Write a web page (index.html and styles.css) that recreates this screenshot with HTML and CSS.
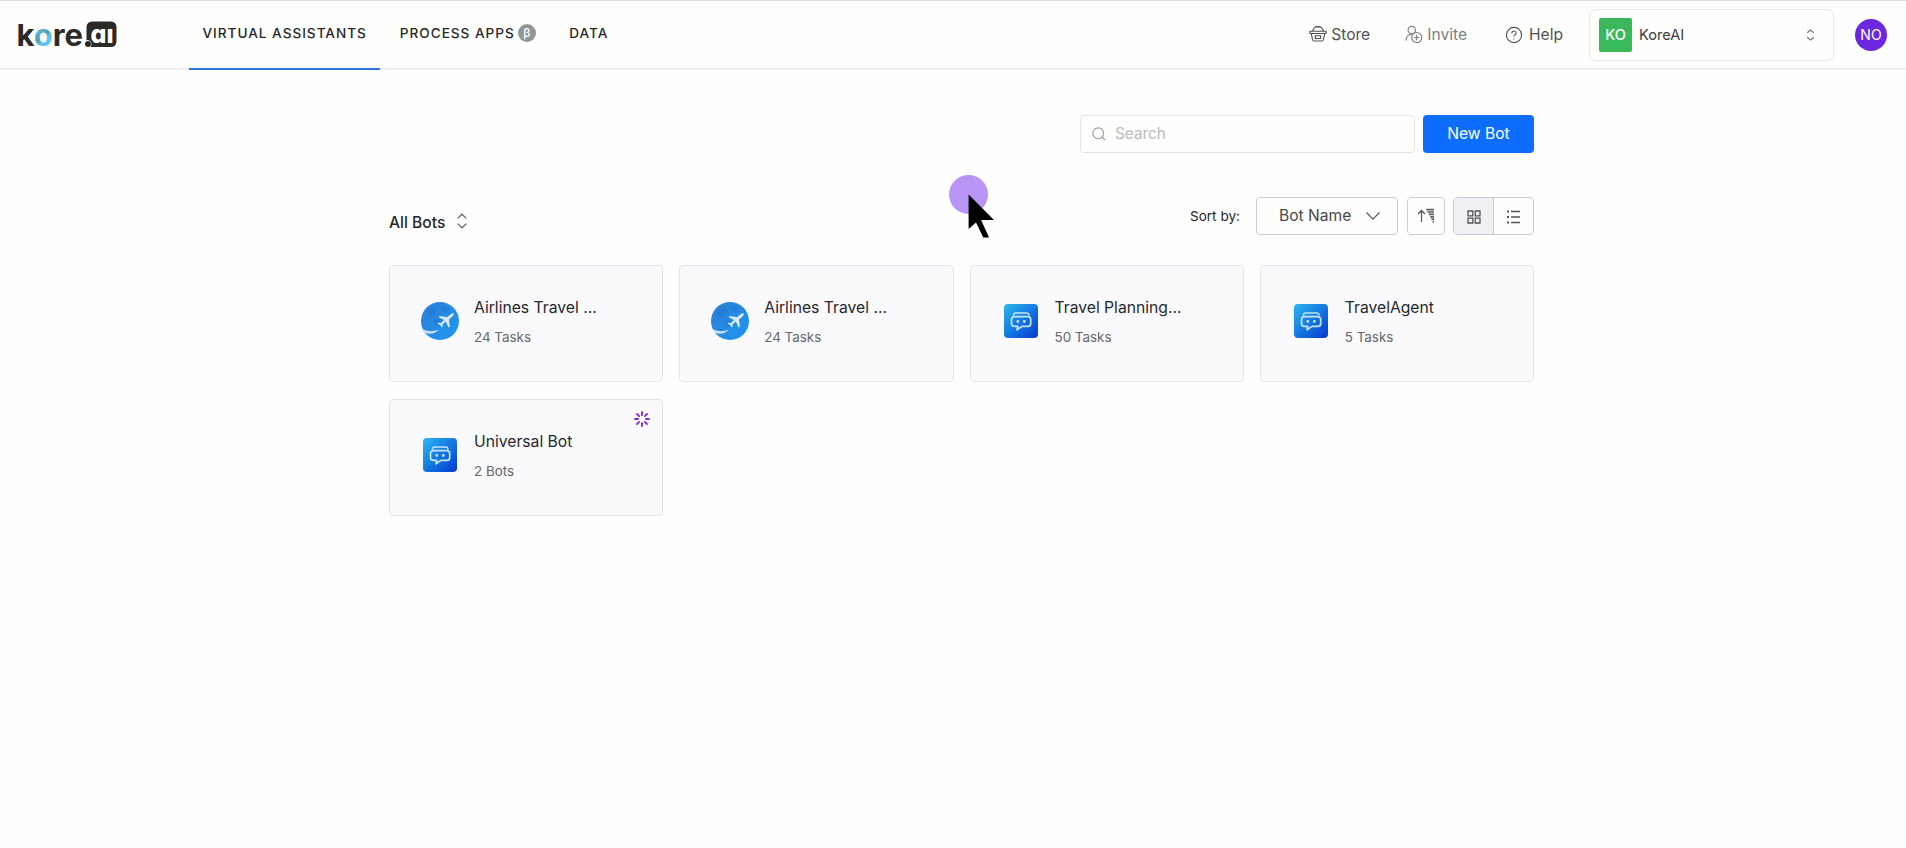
FILE: index.html
```
<!DOCTYPE html>
<html lang="en">
<head>
<meta charset="utf-8">
<title>Virtual Assistants</title>
<link rel="stylesheet" href="styles.css">
</head>
<body>
<svg class="defs" width="0" height="0" aria-hidden="true">
  <defs>
    <linearGradient id="bot-fill" x1="0" y1="0" x2="1" y2="1"><stop offset="0" stop-color="#2cb8ee"/><stop offset=".5" stop-color="#1478e2"/><stop offset="1" stop-color="#0538cf"/></linearGradient>
    <linearGradient id="sky" x1="0" y1="0" x2="1" y2="1"><stop offset="0" stop-color="#2b7fd6"/><stop offset="1" stop-color="#1f97f0"/></linearGradient>
    <linearGradient id="ring" gradientUnits="userSpaceOnUse" x1="20" y1="20" x2="35" y2="37"><stop offset="0" stop-color="#62c4f0"/><stop offset=".35" stop-color="#4f9fa8"/><stop offset=".6" stop-color="#62c4f0"/><stop offset="1" stop-color="#62c4f0"/></linearGradient>
    <symbol id="bot" viewBox="0 0 34 34">
      <rect width="34" height="34" rx="4" fill="url(#bot-fill)"/>
      <g fill="none" stroke="#c4e4fd" stroke-width="1.7" stroke-linecap="round" stroke-linejoin="round">
        <path d="M9.500 10.900q.2-1.900 2.200-1.900h11q2 0 2.200 1.900"/>
        <path d="M10.500 12.600h13.200q3 0 3 3v3.800q0 3-3 3h-5.700l-5 3.400.8-3.400h-3.300q-3 0-3-3v-3.800q0-3 3-3z"/>
      </g>
      <circle cx="13.800" cy="17.500" r="1.400" fill="#c4e4fd"/><circle cx="20.300" cy="17.500" r="1.400" fill="#c4e4fd"/>
    </symbol>
    <symbol id="plane" viewBox="0 0 38 38">
      <circle cx="19" cy="19" r="19" fill="url(#sky)"/>
      <path d="M5 9l5-4 7 3-3 6-6 2zM21 3l8 3-3 5-6-2zM12 18l6-2 3 5-5 4z" fill="#1d6fca" opacity=".35"/>
      <path d="M1 27Q9 31 18 27.500Q12 34 3.300 30.500z" fill="#c9dff3"/>
      <path d="M32.800 11.500q-1.500-.5-3.100.8l-3.700 3-7-1.300-1.400 1.200 5.600 2.700-3.400 3.100-2.300-.2-1 .9 2.800 1.200 1.300 2.700 1-.9-.1-2.100 3.300-3 2.700 6 1.400-1.200-.9-7 3.700-3.200q1.500-1.300 1.100-2.700z" fill="#dce8f4"/>
    </symbol>
  </defs>
</svg>
<header class="topbar">
  <svg class="logo" viewBox="0 0 102 50" role="img" aria-label="kore.ai">
    <text class="logo-text" x="-.5" y="36" textLength="66.500" lengthAdjust="spacingAndGlyphs">k<tspan fill="url(#ring)">o</tspan>re</text>
    <rect x="69.500" y="11.500" width="30" height="25.500" rx="5.500" fill="#2b2a29"/>
    <circle cx="70.200" cy="34.200" r="4.200" fill="#fefefd"/><circle cx="71" cy="34" r="3" fill="#2b2a29"/>
    <text class="logo-ai" x="73.500" y="32.500" textLength="23" lengthAdjust="spacingAndGlyphs">aı</text>
  </svg>
  <nav class="tabs">
    <a class="tab active">VIRTUAL ASSISTANTS</a>
    <a class="tab">PROCESS APPS<span class="beta">β</span></a>
    <a class="tab">DATA</a>
  </nav>
  <div class="actions">
    <a class="action store"><svg width="18" height="18" viewBox="0 0 18 18"><path d="M1 6.200h16v2.300H1zM2.300 8.500l1.200 6q.3 1.500 1.800 1.500h7.400q1.500 0 1.800-1.500l1.200-6M3.500 6.200Q5 2 7 2h4q2 0 3.500 4.200M6.300 1.500h5.400M6.300 10.700h5.400v2.800H6.300z"/></svg>Store</a>
    <a class="action invite"><svg width="18" height="19" viewBox="0 0 18 19"><circle cx="6.800" cy="5" r="3.700"/><path d="M1 15.500q.2-6 5.800-6.300"/><circle cx="11.700" cy="12.500" r="5"/><path d="M11.700 9.800v5.400M9 12.500h5.400"/></svg>Invite</a>
    <a class="action help"><svg width="18" height="18" viewBox="0 0 18 18"><circle cx="9" cy="9" r="7.600"/><path d="M6.800 7.200Q7 5 9 5t2.200 2q0 1.200-1.200 1.800-1 .6-1 1.700"/><path d="M9 12.500v1"/></svg>Help</a>
  </div>
  <div class="account"><span class="account-badge">KO</span>KoreAI<svg width="9" height="12" viewBox="0 0 9 12"><path d="M1.200 3.800l3.300-2.800 3.300 2.800M1.200 8.200l3.300 2.800 3.300-2.800"/></svg></div>
  <div class="avatar">NO</div>
</header>
<main class="content">
  <div class="search-row">
    <div class="search"><svg width="14" height="14" viewBox="0 0 14 14"><circle cx="6.300" cy="6.300" r="5.400"/><path d="M10.200 10.200L13 13"/></svg>Search</div>
    <button class="new-bot">New Bot</button>
  </div>
  <div class="filter-row">
    <div class="all-bots">All Bots<svg width="10" height="16" viewBox="0 0 10 16"><path d="M.6 5.400L5 1.200l4.400 4.200M.6 10.600L5 14.800l4.400-4.200"/></svg></div>
    <div class="sorting">
      <span class="sort-label">Sort by:</span>
      <div class="sort-select">Bot Name<svg width="16" height="10" viewBox="0 0 16 10"><path d="M1.500 1.500L8 8.200l6.500-6.700"/></svg></div>
      <div class="sort-order"><svg width="18" height="16" viewBox="0 0 18 16"><path d="M4.500 14V2.500M1 6l3.500-3.500L8 6" fill="none" stroke="#55585e" stroke-width="1.300"/><path d="M9.200 1.600h7.800M10.400 4h6.600M11.800 6.400H17M13.200 8.800H17M14.300 11.200H17M15.500 13.600H17" stroke="#606268" stroke-width="1.700"/></svg></div>
      <div class="views">
        <div class="view on"><svg width="14" height="14" viewBox="0 0 14 14"><path d="M1 1h4.800v4.800H1zM8.200 1H13v4.800H8.200zM1 8.200h4.800V13H1zM8.200 8.200H13V13H8.200z"/></svg></div>
        <div class="view"><svg width="15" height="14" viewBox="0 0 15 14"><path d="M5 1.500h9M5 7h9M5 12.500h9"/><path d="M1 1.500h2M1 7h2M1 12.500h2" stroke-width="2"/></svg></div>
      </div>
    </div>
  </div>
  <section class="grid">
    <article class="card"><svg class="pic"><use href="#plane"/></svg><div><h3>Airlines Travel ...</h3><p>24 Tasks</p></div></article>
    <article class="card"><svg class="pic"><use href="#plane"/></svg><div><h3>Airlines Travel ...</h3><p>24 Tasks</p></div></article>
    <article class="card"><svg class="pic sq"><use href="#bot"/></svg><div><h3>Travel Planning...</h3><p>50 Tasks</p></div></article>
    <article class="card"><svg class="pic sq"><use href="#bot"/></svg><div><h3>TravelAgent</h3><p>5 Tasks</p></div></article>
    <article class="card"><svg class="pic sq"><use href="#bot"/></svg><div><h3>Universal Bot</h3><p>2 Bots</p></div>
      <svg class="spark" viewBox="0 0 16 16"><path d="M8 1v3M8 12v3M1 8h3M12 8h3M3 3l2.100 2.100M10.900 10.900L13 13M3 13l2.100-2.100M10.900 5.100L13 3"/></svg>
    </article>
  </section>
</main>
<svg class="pointer" width="46" height="64" viewBox="0 0 46 64"><circle cx="19.500" cy="19.500" r="19.500" fill="#b894f4"/><path d="M19.600 19.500V54l7.400-6.500L34.300 62.500H40L33 47l-.8-2H45z" fill="#000"/></svg>
</body>
</html>
```
FILE: styles.css
```
* { box-sizing: border-box; }
body { margin: 0; height: 848px; overflow: hidden; background: #fefefd; color: #26282c; font-family: Inter, "Liberation Sans", sans-serif; }
svg { display: block; flex: none; fill: none; }
.defs { position: absolute; }
.topbar { height: 70px; display: flex; align-items: center; border-top: 1px solid #dedee5; border-bottom: 2px solid #ededf1; padding: 0 19px 0 17px; }
.logo { width: 102px; height: 50px; }
.logo-text { font: 700 30px Inter, sans-serif; fill: #2b2a29; }
.logo-ai { font: 800 26px Inter, sans-serif; font-feature-settings: "cv11"; fill: #fefefd; }
.tabs { display: flex; gap: 5.500px; margin-left: 70px; align-self: stretch; }
.tab { display: flex; align-items: center; height: 69px; padding: 0 14px 5px; font-size: 13.6px; font-weight: 500; letter-spacing: .98px; }
.tab.active { border-bottom: 2px solid #2b74e2; padding: 0 13.500px 3px; }
.beta { width: 18px; height: 18px; margin: -1px 0 0 3px; border-radius: 50%; background: #929497; color: #fff; font-size: 12px; line-height: 18px; text-align: center; letter-spacing: 0; }
.actions { display: flex; margin-left: auto; align-items: center; font-size: 15.6px; color: #505257; }
.action { display: flex; align-items: center; gap: 4px; }
.action svg { stroke: currentColor; stroke-width: 1.15; }
.store { padding-bottom: 1px; }
.invite { margin-left: 35px; color: #7c7e83; }
.help { margin-left: 38px; gap: 6px; }
.account { display: flex; align-items: center; width: 245px; height: 52px; margin-left: 26px; padding: 0 18px 0 9px; border: 1px solid #e8e8ee; border-radius: 7px; font-size: 14.6px; color: #3a3c40; }
.account-badge { width: 33px; height: 34px; margin-right: 7px; border-radius: 2px; background: #39b95b; color: #fff; font-weight: 500; line-height: 34px; text-align: center; }
.account svg { margin-left: auto; stroke: #75777c; stroke-width: 1.2; }
.avatar { width: 32px; height: 32px; margin-left: 21px; border-radius: 50%; background: #6d28df; color: #fff; font-size: 14px; line-height: 32px; text-align: center; }
.content { width: 1145px; margin: 45px 0 0 389px; }
.search-row { display: flex; justify-content: flex-end; gap: 8px; }
.search { display: flex; align-items: center; gap: 9px; width: 335px; height: 38px; padding: 0 11px 2px; border: 1px solid #e3e4ea; border-radius: 4px; font-size: 15.3px; color: #b9bbc0; }
.search svg { margin-top: 1px; stroke: #9a9ca2; stroke-width: 1.1; }
.new-bot { width: 111px; height: 38px; padding: 0 0 2px; border: 0; border-radius: 4px; background: #0d6efd; color: #fff; font: 400 15.6px Inter, sans-serif; }
.filter-row { display: flex; justify-content: space-between; align-items: center; height: 38px; margin-top: 44px; }
.all-bots { display: flex; align-items: center; gap: 12px; padding: 13px 0 0; font-size: 15.6px; font-weight: 500; }
.all-bots svg { margin-top: -3px; stroke: #62646a; stroke-width: 1.2; }
.sorting { display: flex; align-items: center; }
.sort-label { margin-right: 16px; font-size: 13.6px; }
.sort-select, .sort-order, .views { display: flex; align-items: center; height: 38px; border: 1px solid #cdced5; border-radius: 4px; }
.sort-select { width: 142px; padding: 0 0 1px 22px; font-size: 15.6px; color: #47494e; }
.sort-select svg { margin-left: auto; margin-right: 16px; stroke: #55575c; stroke-width: 1.2; }
.sort-order { width: 38px; margin: 0 8px 0 9px; justify-content: center; }
.views { width: 81px; }
.view { flex: 1; height: 100%; display: flex; align-items: center; justify-content: center; padding-top: 2px; }
.view svg { stroke: #54555c; stroke-width: 1.3; }
.view.on { background: #f0f0f4; border-right: 1px solid #cdced5; }
.grid { display: grid; grid-template-columns: repeat(4, 1fr); gap: 17px 16px; margin-top: 30px; }
.card { position: relative; display: flex; height: 117px; padding: 33px 0 0 31px; border: 1px solid #e4e5ec; border-radius: 4px; background: #fafafd; }
.pic { width: 38px; height: 38px; margin: 3px 15px 0 0; }
.pic.sq { width: 34px; height: 34px; margin: 5px 17px 0 2px; }
.card h3 { margin: 1px 0 0; font-size: 15.7px; line-height: 16px; font-weight: 400; }
.card p { margin: 13px 0 0; font-size: 13.4px; line-height: 16px; color: #66676c; }
.spark { position: absolute; right: 12px; top: 11px; width: 16px; height: 16px; stroke: #872ee5; stroke-width: 1.900; stroke-linecap: round; }
.pointer { position: absolute; left: 949px; top: 175px; }
```
